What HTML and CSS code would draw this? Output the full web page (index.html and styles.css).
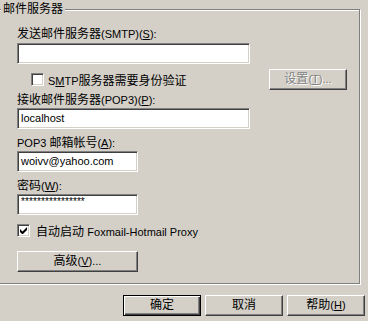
FILE: index.html
```html
<!DOCTYPE html>
<html lang="zh-CN">
<head>
  <meta charset="UTF-8">
  <title>邮件服务器</title>
  <link rel="stylesheet" href="styles.css">
</head>
<body>
  <div class="dialog">
    <div class="group">
      <div class="group-title">邮件服务器</div>
      <div class="group-body">
        <label class="field-label label-smtp">发送邮件服务器<span class="en">(SMTP)(<u>S</u>):</span></label>
        <div class="edit wide"></div>

        <div class="check-row auth-row">
          <span class="checkbox"></span>
          <span class="check-text"><span class="en">S<u>M</u>TP</span>服务器需要身份验证</span>
          <button class="btn disabled setup">设置<span class="en">(<u>T</u>)...</span></button>
        </div>

        <label class="field-label label-pop">接收邮件服务器<span class="en">(POP3)(<u>P</u>):</span></label>
        <div class="edit wide">localhost</div>

        <label class="field-label label-acct"><span class="en">POP3 </span>邮箱帐号<span class="en">(<u>A</u>):</span></label>
        <div class="edit narrow">woivv@yahoo.com</div>

        <label class="field-label label-pass">密码<span class="en">(<u>W</u>):</span></label>
        <div class="edit narrow password">****************</div>

        <div class="check-row proxy-row">
          <span class="checkbox">
            <svg width="7" height="7" viewBox="0 0 7 7"><path d="M0 2v3l2 2h1l4-4V0L2.5 4.5z" fill="#000"/></svg>
          </span>
          <span class="check-text">自动启动 <span class="en">Foxmail-Hotmail Proxy</span></span>
        </div>

        <button class="btn advanced">高级<span class="en">(<u>V</u>)...</span></button>
      </div>
    </div>

    <div class="actions">
      <button class="btn default">确定</button>
      <button class="btn">取消</button>
      <button class="btn">帮助<span class="en">(<u>H</u>)</span></button>
    </div>
  </div>
</body>
</html>
```

FILE: styles.css
```css
body {
  margin: 0;
  background-color: #d4d0c8;
  font-family: "Liberation Sans", "Noto Sans CJK SC", sans-serif;
  font-size: 12px;
  color: #000;
  overflow: hidden;
}
.dialog {
  width: 368px;
  height: 321px;
}
.en {
  font-size: 11px;
}
u {
  text-decoration: underline;
  text-underline-offset: 1px;
}

/* Etched group box, left edge runs off screen */
.group {
  box-sizing: border-box;
  width: 370px;
  height: 275px;
  margin: 9px 0 0 -10px;
  border: 1px solid #808080;
  box-shadow: 1px 1px 0 #fff, inset 1px 1px 0 #fff;
}
.group-title {
  width: max-content;
  height: 14px;
  margin: -8px 0 0 10px;
  padding: 0 2px;
  line-height: 14px;
  background-color: #d4d0c8;
}
.group-body {
  padding-left: 26px;
}

.field-label {
  display: block;
  height: 14px;
  line-height: 14px;
  white-space: nowrap;
}
.label-smtp { margin-top: 11px; }
.label-pop  { margin-top: 3px; }
.label-acct { margin-top: 7px; }
.label-pass { margin-top: 7px; }

/* Sunken edit box */
.edit {
  box-sizing: border-box;
  height: 21px;
  margin-top: 1px;
  padding: 0 3px;
  background-color: #fff;
  border: 1px solid;
  border-color: #808080 #fff #fff #808080;
  box-shadow: inset 1px 1px 0 #404040, inset -1px -1px 0 #d4d0c8;
  font-size: 11px;
  line-height: 19px;
  white-space: nowrap;
  overflow: hidden;
}
.label-smtp + .edit { margin-top: 2px; }
.wide { width: 233px; }
.narrow { width: 121px; }
.password {
  font-size: 10px;
  letter-spacing: 0.1px;
  line-height: 13px;
}

.check-row {
  display: flex;
  align-items: center;
  white-space: nowrap;
}
.checkbox {
  box-sizing: border-box;
  width: 13px;
  height: 13px;
  flex: none;
  display: flex;
  align-items: center;
  justify-content: center;
  background-color: #fff;
  border: 1px solid;
  border-color: #808080 #fff #fff #808080;
  box-shadow: inset 1px 1px 0 #404040, inset -1px -1px 0 #d4d0c8;
}
.auth-row {
  height: 21px;
  margin-top: 5px;
  padding-right: 12px;
}
.auth-row .checkbox {
  margin-left: 14px;
}
.auth-row .check-text {
  margin-left: 4px;
}
.auth-row .setup {
  margin-left: auto;
}
.proxy-row {
  height: 13px;
  margin-top: 9px;
}
.proxy-row .check-text {
  margin-left: 6px;
}

/* Raised push button */
.btn {
  box-sizing: border-box;
  width: 78px;
  height: 21px;
  padding: 0;
  background-color: #d4d0c8;
  border: 1px solid;
  border-color: #fff #404040 #404040 #fff;
  box-shadow: inset -1px -1px 0 #808080, inset 1px 1px 0 #d4d0c8;
  font-family: inherit;
  font-size: 12px;
  color: #000;
  line-height: 17px;
  white-space: nowrap;
}
.btn.disabled {
  color: #808080;
  text-shadow: 1px 1px 0 #fff;
}
.btn.advanced {
  display: block;
  width: 121px;
  margin-top: 14px;
}
.btn.default {
  border-color: #000;
  box-shadow: inset 1px 1px 0 #fff, inset -1px -1px 0 #404040, inset -2px -2px 0 #808080;
}

.actions {
  display: flex;
  justify-content: flex-end;
  gap: 4px;
  margin-top: 11px;
  padding-right: 3px;
}
```
